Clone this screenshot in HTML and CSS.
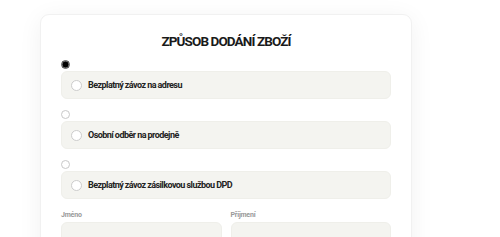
FILE: index.html
```html
<!DOCTYPE html>
<html lang="cs">
<head>
    <meta charset="UTF-8">
    <meta name="viewport" content="width=device-width, initial-scale=1.0">
    <title>Způsob dodání zboží</title>
    <link rel="stylesheet" href="styles.css">
</head>
<body>
    <div class="page">
        <div class="card">
            <h1>ZPŮSOB DODÁNÍ ZBOŽÍ</h1>

            <!-- způsoby dodání -->
            <div class="delivery">
                <label class="option">
                    <input type="radio" name="delivery" value="adresa" checked>
                    <span class="option-box">
                        <span class="dot"></span>
                        Bezplatný závoz na adresu
                    </span>
                </label>
                <label class="option">
                    <input type="radio" name="delivery" value="prodejna">
                    <span class="option-box">
                        <span class="dot"></span>
                        Osobní odběr na prodejně
                    </span>
                </label>
                <label class="option">
                    <input type="radio" name="delivery" value="dpd">
                    <span class="option-box">
                        <span class="dot"></span>
                        Bezplatný závoz zásilkovou službou DPD
                    </span>
                </label>
            </div>

            <div class="form-row">
                <div class="form-group">
                    <label for="firstName">Jméno</label>
                    <input type="text" id="firstName" name="firstName">
                </div>
                <div class="form-group">
                    <label for="lastName">Příjmení</label>
                    <input type="text" id="lastName" name="lastName">
                </div>
            </div>
        </div>
    </div>
</body>
</html>
```

FILE: styles.css
```css
* {
    margin: 0;
    padding: 0;
    box-sizing: border-box;
}

body {
    font-family: 'Roboto', sans-serif;
    background: #fff;
    color: #222;
}

.page {
    padding: 14px 0 0 40px;
}

.card {
    width: 372px;
    background: #fff;
    border: 1px solid #f1f1f1;
    border-radius: 9px;
    box-shadow: 0 4px 24px rgba(0, 0, 0, 0.06);
    padding: 17px 20px 40px;
}

h1 {
    text-align: center;
    font-size: 13.5px;
    line-height: 18px;
    font-weight: 700;
    letter-spacing: -0.9px;
    color: #1a1a1a;
    margin-bottom: 10px;
}

.option {
    display: block;
    margin-bottom: 11px;
    cursor: pointer;
}

.option input[type="radio"] {
    appearance: none;
    -webkit-appearance: none;
    display: block;
    width: 9px;
    height: 9px;
    border: 1px solid #c8c8c8;
    border-radius: 50%;
    background: #fff;
    margin: 0 0 2px 0;
}

.option input[type="radio"]:checked {
    border-color: #555;
    background: radial-gradient(circle, #000 0 55%, #777 65%);
}

.option-box {
    display: flex;
    align-items: center;
    gap: 6px;
    height: 28px;
    padding-left: 9px;
    background: #f4f4f0;
    border: 1px solid #efefea;
    border-radius: 6px;
    font-size: 9px;
    font-weight: 700;
    letter-spacing: -0.55px;
    color: #222;
}

.dot {
    width: 11px;
    height: 11px;
    border: 1px solid #ccc;
    border-radius: 50%;
    background: #fff;
    flex-shrink: 0;
}

.form-row {
    display: grid;
    grid-template-columns: 1fr 1fr;
    gap: 9px;
    margin-top: 7px;
}

.form-group label {
    display: block;
    font-size: 7px;
    font-weight: 700;
    letter-spacing: -0.2px;
    color: #999;
    line-height: 10px;
    margin-bottom: 2px;
}

.form-group input[type="text"] {
    width: 100%;
    height: 30px;
    background: #f4f4f0;
    border: 1px solid #efefea;
    border-radius: 6px;
}
```
